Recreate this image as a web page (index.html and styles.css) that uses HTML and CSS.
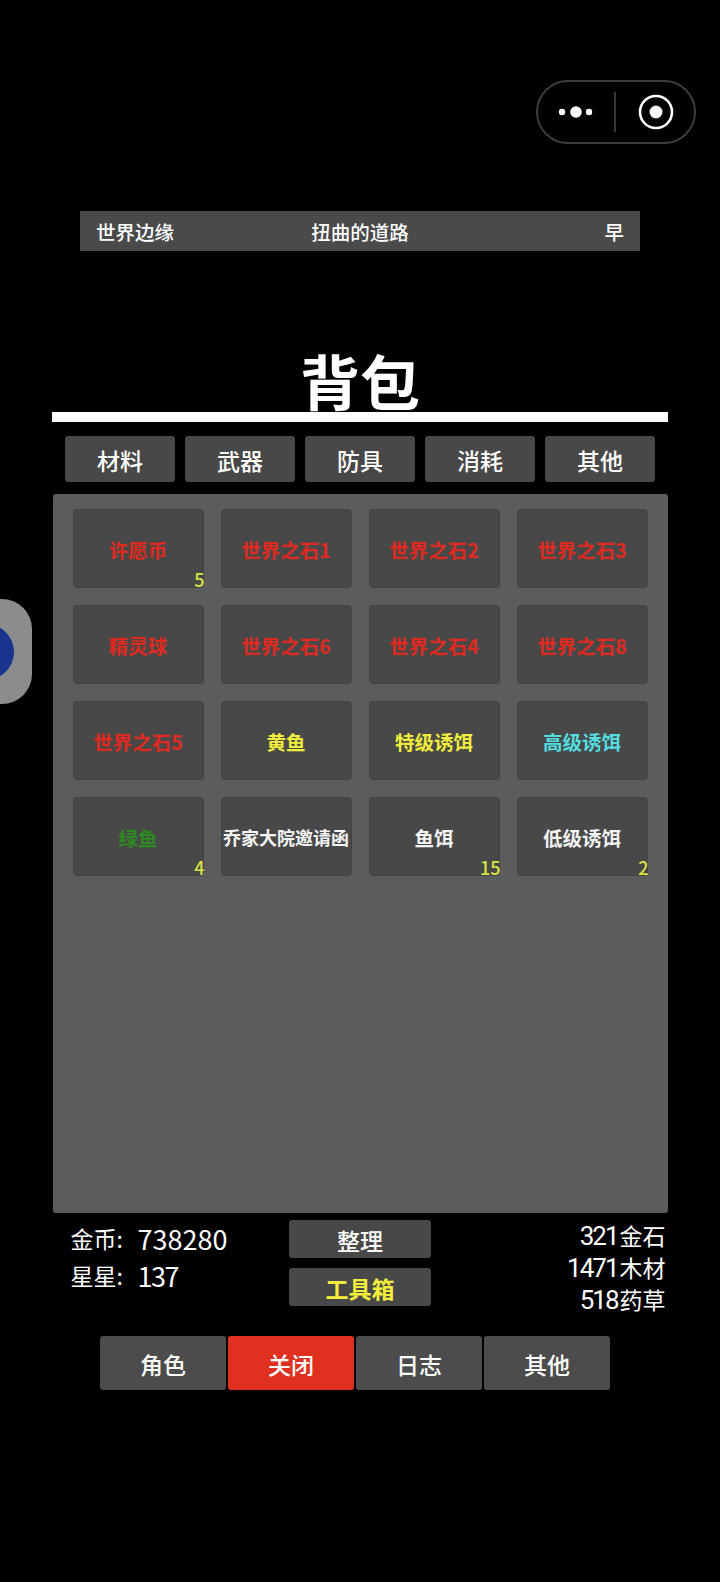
FILE: index.html
```html
<!DOCTYPE html>
<html lang="zh">
<head>
<meta charset="utf-8">
<title>背包</title>
<link rel="stylesheet" href="styles.css">
</head>
<body>
<div class="page">
  <div class="capsule">
    <svg class="capsule-icon" width="160" height="64" viewBox="0 0 160 64">
      <rect x="1" y="1" width="158" height="62" rx="31" fill="none" stroke="#3c3c3c" stroke-width="2"/>
      <circle cx="26" cy="32" r="3.2" fill="#fff"/>
      <circle cx="40" cy="32" r="5.8" fill="#fff"/>
      <circle cx="53" cy="32" r="3.2" fill="#fff"/>
      <line x1="79" y1="12" x2="79" y2="52" stroke="#4a4a4a" stroke-width="1.5"/>
      <circle cx="120" cy="32" r="16" fill="none" stroke="#fff" stroke-width="2.6"/>
      <circle cx="120" cy="32" r="6.5" fill="#fff"/>
    </svg>
  </div>
  <div class="float-ball"><div class="float-dot"></div></div>

  <div class="status-bar">
    <span>世界边缘</span>
    <span class="status-mid">扭曲的道路</span>
    <span class="status-end">早</span>
  </div>

  <h1 class="title">背包</h1>

  <div class="tabs">
    <div class="tab">材料</div>
    <div class="tab">武器</div>
    <div class="tab">防具</div>
    <div class="tab">消耗</div>
    <div class="tab">其他</div>
  </div>

  <div class="panel">
    <div class="grid">
      <div class="cell red">许愿币<span class="count">5</span></div>
      <div class="cell red">世界之石1</div>
      <div class="cell red">世界之石2</div>
      <div class="cell red">世界之石3</div>
      <div class="cell red">精灵球</div>
      <div class="cell red">世界之石6</div>
      <div class="cell red">世界之石4</div>
      <div class="cell red">世界之石8</div>
      <div class="cell red">世界之石5</div>
      <div class="cell yellow">黄鱼</div>
      <div class="cell yellow">特级诱饵</div>
      <div class="cell cyan">高级诱饵</div>
      <div class="cell green">绿鱼<span class="count">4</span></div>
      <div class="cell white small">乔家大院邀请函</div>
      <div class="cell white">鱼饵<span class="count">15</span></div>
      <div class="cell white">低级诱饵<span class="count">2</span></div>
    </div>
  </div>

  <div class="footer">
    <div class="stats">
      <div class="stat"><span>金币:</span><span class="value">738280</span></div>
      <div class="stat"><span>星星:</span><span class="value tight">137</span></div>
    </div>
    <div class="actions">
      <div class="action">整理</div>
      <div class="action strong yellow">工具箱</div>
    </div>
    <div class="resources">
      <div class="resource"><span class="num">321</span><span>金石</span></div>
      <div class="resource"><span class="num">1471</span><span>木材</span></div>
      <div class="resource"><span class="num">518</span><span>药草</span></div>
    </div>
  </div>

  <nav class="nav">
    <div class="nav-item">角色</div>
    <div class="nav-item active">关闭</div>
    <div class="nav-item">日志</div>
    <div class="nav-item">其他</div>
  </nav>
</div>
</body>
</html>
```
FILE: styles.css
```css
* { box-sizing: border-box; }
html, body { margin: 0; padding: 0; background: #000; }
body {
  font-family: "Noto Sans CJK SC", "Noto Sans", sans-serif;
  color: #fff;
}
.page {
  position: relative;
  width: 720px;
  height: 1582px;
  overflow: hidden;
  padding-top: 211px;
  display: flex;
  flex-direction: column;
  align-items: center;
}
.capsule { position: absolute; left: 536px; top: 80px; line-height: 0; }
.float-ball {
  position: absolute;
  left: -40px;
  top: 599px;
  width: 72px;
  height: 105px;
  background: #8b8d8d;
  border-radius: 30px;
  display: flex;
  align-items: center;
}
.float-dot {
  width: 56px;
  height: 56px;
  margin-left: -2px;
  border-radius: 50%;
  background: #18348f;
}
.status-bar {
  width: 560px;
  height: 40px;
  background: #4a4a4a;
  padding: 0 16px;
  display: grid;
  grid-template-columns: 1fr auto 1fr;
  font-size: 19.5px;
  font-weight: 500;
  line-height: 42px;
}
.status-end { text-align: right; }
.title {
  margin: 97px 0 0;
  width: 616px;
  height: 74px;
  border-bottom: 10px solid #fff;
  font-size: 60px;
  font-weight: 700;
  line-height: 64px;
  text-align: center;
}
.tabs {
  margin-top: 14px;
  display: flex;
  gap: 10px;
}
.tab {
  width: 110px;
  height: 46px;
  background: #484848;
  border-radius: 3px;
  font-size: 23px;
  font-weight: 500;
  line-height: 48px;
  text-align: center;
}
.panel {
  margin-top: 12px;
  width: 615px;
  height: 719px;
  background: #5c5c5c;
  border-radius: 3px;
  padding: 15px 20px;
}
.grid {
  display: grid;
  grid-template-columns: repeat(4, 131px);
  grid-auto-rows: 79px;
  gap: 17px;
}
.cell {
  position: relative;
  background: #484848;
  border: 1px solid #434343;
  border-radius: 4px;
  font-size: 19.5px;
  font-weight: 700;
  line-height: 79px;
  text-align: center;
  white-space: nowrap;
}
.small { font-size: 18px; }
.red { color: #e0291f; }
.yellow { color: #f2ee3c; }
.cyan { color: #54dde0; }
.green { color: #2c8a1f; }
.white { color: #f4f4f4; }
.count {
  position: absolute;
  right: -2px;
  bottom: -2px;
  font-size: 18px;
  font-weight: 500;
  line-height: 20px;
  color: #dbe33f;
}
.footer {
  margin-top: 7px;
  width: 615px;
  display: grid;
  grid-template-columns: 1fr 142px 1fr;
}
.stats { padding: 0 0 0 18px; }
.stat {
  display: grid;
  grid-template-columns: 67px auto;
  align-items: center;
  font-size: 23px;
  line-height: 37px;
}
.value { font-size: 27px; line-height: 36px; }
.tight { letter-spacing: -1.5px; }
.actions { display: flex; flex-direction: column; gap: 10px; }
.action {
  height: 38px;
  background: #484848;
  border-radius: 3px;
  font-size: 23px;
  font-weight: 500;
  line-height: 40px;
  text-align: center;
}
.strong { font-weight: 700; }
.resources {
  margin-top: -1px;
  padding-right: 2px;
  font-size: 23px;
}
.resource {
  height: 32px;
  display: flex;
  justify-content: flex-end;
  align-items: baseline;
  line-height: 32px;
}
.num {
  font-family: Roboto, "Noto Sans", sans-serif;
  font-size: 26px;
  line-height: 30px;
  letter-spacing: -2px;
  margin-right: 2px;
}
.nav {
  margin-top: 21px;
  align-self: flex-start;
  margin-left: 100px;
  display: flex;
  gap: 2px;
}
.nav-item {
  width: 126px;
  height: 54px;
  background: #4c4c4c;
  border-radius: 3px;
  font-size: 23px;
  font-weight: 500;
  line-height: 57px;
  text-align: center;
}
.active { background: #e03020; }
```
